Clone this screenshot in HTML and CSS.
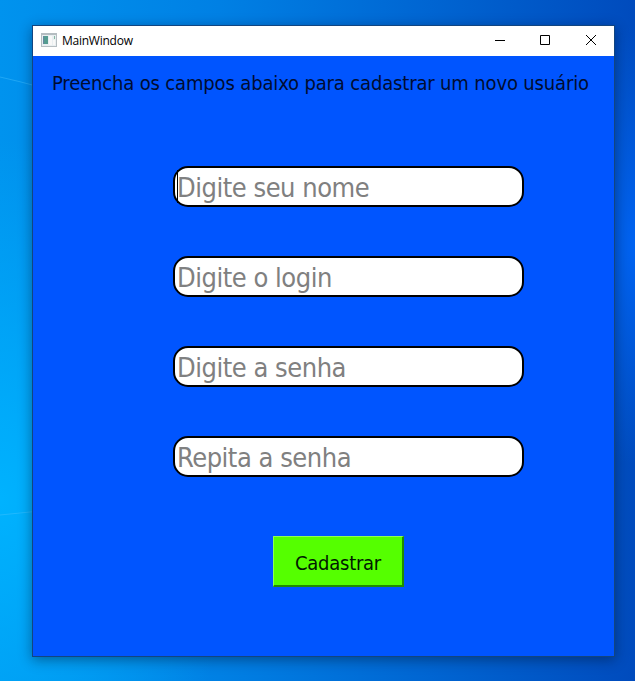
FILE: index.html
```html
<!DOCTYPE html>
<html lang="pt-BR">
<head>
<meta charset="utf-8">
<title>MainWindow</title>
<link rel="stylesheet" href="styles.css">
</head>
<body>
<svg class="wallpaper" width="635" height="681" viewBox="0 0 635 681" aria-hidden="true">
  <path d="M0 77Q18 81 40 87M0 515L40 511" fill="none" stroke="#4dc5ff" stroke-opacity=".4"/>
</svg>
<main class="window">
  <header class="titlebar">
    <svg class="app-icon" width="16" height="14" viewBox="0 0 16 14">
      <path fill="#b5bdc1" d="M0 0h16v14H0z"/>
      <path fill="#e9eff1" d="M1 2h14v11H1z"/>
      <path fill="#559c91" d="M2 3h5v8H2z"/>
      <path fill="#6688a0" d="M2 3h1v8H2z"/>
      <path fill="#f8f8f8" d="M8 3h3v9H8zM12 7h2v5h-2z"/>
      <path fill="#86b8a4" d="M13 3h1v3h-1z"/>
    </svg>
    <span class="title">MainWindow</span>
    <nav class="controls">
      <svg width="46" height="30" viewBox="0 0 46 30"><path d="M19 14.5h10"/></svg>
      <svg width="46" height="30" viewBox="0 0 46 30"><path d="M18.5 9.5h9v9h-9z"/></svg>
      <svg width="46" height="30" viewBox="0 0 46 30"><path d="M18 9l10 10M28 9l-10 10"/></svg>
    </nav>
  </header>
  <section class="content">
    <h1 class="heading">Preencha os campos abaixo para cadastrar um novo usuário</h1>
    <form class="form">
      <div class="field" role="textbox"><span class="caret"></span><span class="hint">Digite seu nome</span></div>
      <div class="field" role="textbox"><span class="hint">Digite o login</span></div>
      <div class="field" role="textbox"><span class="hint">Digite a senha</span></div>
      <div class="field" role="textbox"><span class="hint">Repita a senha</span></div>
    </form>
    <button class="submit" type="button">Cadastrar</button>
  </section>
</main>
</body>
</html>
```
FILE: styles.css
```css
* { box-sizing: border-box; }
body {
  margin: 0;
  width: 635px;
  height: 681px;
  padding: 25px 20px 24px 32px;
  overflow: hidden;
  font-family: "DejaVu Sans Condensed", "DejaVu Sans", sans-serif;
  background:
    radial-gradient(ellipse 80px 220px at 635px 245px, rgba(0, 105, 255, .8), transparent),
    radial-gradient(ellipse 240px 360px at 0 500px, rgba(0, 180, 255, .95), transparent),
    linear-gradient(90deg, #0093ee 0, #0080e4 220px, #0065d2 430px, #004bbd 635px);
}
.wallpaper { position: absolute; left: 0; top: 0; }
.window {
  position: relative;
  width: 583px;
  height: 632px;
  border: 1px solid #124580;
  box-shadow: 0 3px 12px rgba(0, 20, 50, .45);
  background: #0055ff;
}
.titlebar {
  display: flex;
  align-items: center;
  height: 30px;
  padding-left: 8px;
  background: #fff;
}
.app-icon { margin-bottom: 2px; }
.title {
  margin-left: 5px;
  font: 12px/30px "Open Sans", sans-serif;
  letter-spacing: -.25px;
  color: #000;
}
.controls { display: flex; margin-left: auto; }
.controls path { fill: none; stroke: #000; }
.content { display: flex; flex-direction: column; }
.heading {
  margin: 15px 0 0 19px;
  font-size: 20px;
  font-weight: 400;
  line-height: 24px;
  white-space: nowrap;
  letter-spacing: -.15px;
  color: #000c30;
}
.form {
  display: grid;
  gap: 49px;
  margin: 71px 0 0 140px;
}
.field {
  position: relative;
  width: 351px;
  height: 41px;
  padding-left: 2px;
  border: 2px solid #000;
  border-radius: 15px;
  background: #fff;
  font-size: 27px;
  line-height: 39px;
  letter-spacing: -.48px;
  color: #808080;
  white-space: nowrap;
}
.caret {
  position: absolute;
  left: 2px;
  top: 2px;
  width: 1px;
  height: 33px;
  background: #000;
}
.submit {
  width: 131px;
  height: 51px;
  margin: 59px 0 0 240px;
  padding: 3px 0 0;
  border: solid;
  border-width: 1px 2px 2px 1px;
  border-color: #8cff55 #208c00 #208c00 #8cff55;
  background: #55ff00;
  font-family: inherit;
  font-size: 20px;
  letter-spacing: -.25px;
  color: #001a00;
}
```
